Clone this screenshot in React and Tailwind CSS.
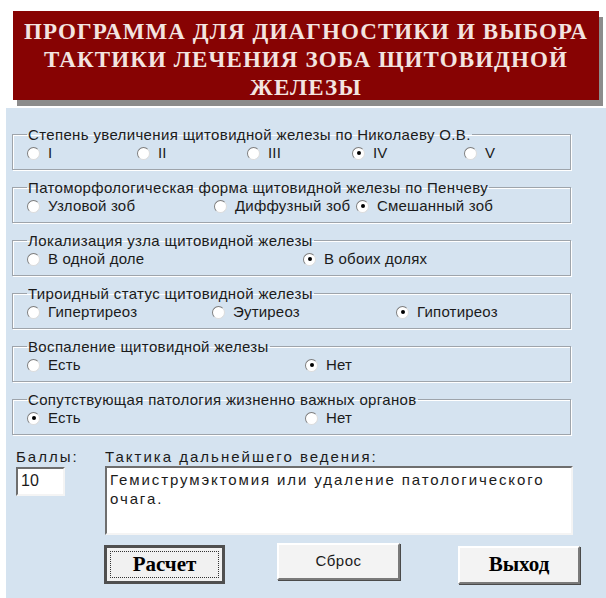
import React from 'react'

// Группы переключателей: подпись рамки, колонки и выбранный пункт
const groups = [
    {
        title: 'Степень увеличения щитовидной железы по Николаеву О.В.',
        cols: 'grid-cols-[110px_110px_105px_112px_1fr]',
        options: ['I', 'II', 'III', 'IV', 'V'],
        checked: 3,
    },
    {
        title: 'Патоморфологическая форма щитовидной железы по Пенчеву',
        cols: 'grid-cols-[187px_142px_1fr]',
        options: ['Узловой зоб', 'Диффузный зоб', 'Смешанный зоб'],
        checked: 2,
    },
    {
        title: 'Локализация узла щитовидной железы',
        cols: 'grid-cols-[276px_1fr]',
        options: ['В одной доле', 'В обоих долях'],
        checked: 1,
    },
    {
        title: 'Тироидный статус щитовидной железы',
        cols: 'grid-cols-[185px_184px_1fr]',
        options: ['Гипертиреоз', 'Эутиреоз', 'Гипотиреоз'],
        checked: 2,
    },
    {
        title: 'Воспаление щитовидной железы',
        cols: 'grid-cols-[278px_1fr]',
        options: ['Есть', 'Нет'],
        checked: 1,
    },
    {
        title: 'Сопутствующая патология жизненно важных органов',
        cols: 'grid-cols-[278px_1fr]',
        options: ['Есть', 'Нет'],
        checked: 0,
    },
]

function Radio({ label, checked }) {
    return (
        <span className="flex items-center gap-[8px] h-[16px] whitespace-nowrap">
            <span className="flex items-center justify-center w-[13px] h-[13px] shrink-0 rounded-full bg-white border border-[#7d7d7d] border-r-[#dcdcdc] border-b-[#dcdcdc]">
                {checked && <span className="w-[4px] h-[4px] rounded-full bg-black" />}
            </span>
            <span className="tracking-[0.2px]">{label}</span>
        </span>
    )
}

function GroupBox({ title, cols, options, checked }) {
    return (
        <fieldset className="w-[559px] ml-[6px] pl-[14px] pt-[2px] pb-[8px] border border-[#9ea4ab] shadow-[1px_1px_0_#ffffff,inset_1px_1px_0_#ffffff]">
            <legend className="px-[1px] leading-[17px] tracking-[0.35px]">{title}</legend>
            <div className={`grid ${cols}`}>
                {options.map((o, i) => (
                    <Radio key={o} label={o} checked={i === checked} />
                ))}
            </div>
        </fieldset>
    )
}

export default function App() {
    return (
        <div className="w-[606px] h-[598px] bg-white font-['Liberation_Sans',Arial,sans-serif] text-[15px] text-[#1b1b1b] overflow-hidden">
            <div className="pt-[11px] pl-[13px]">
                <div className="w-[586px] h-[89px] bg-[#870303] shadow-[4px_6px_0_#8c8c8c] pt-[7px] text-center font-['Liberation_Serif'] font-bold text-[23px] tracking-[1.1px] leading-[28px] text-[#f3e4e0]">
                    <div>ПРОГРАММА ДЛЯ ДИАГНОСТИКИ И ВЫБОРА</div>
                    <div>ТАКТИКИ ЛЕЧЕНИЯ ЗОБА ЩИТОВИДНОЙ</div>
                    <div>ЖЕЛЕЗЫ</div>
                </div>
            </div>

            <div className="mt-[8px] ml-[6px] h-[490px] bg-[#d5e3f0] pt-[18px]">
                <div className="flex flex-col gap-[9px]">
                    {groups.map(g => (
                        <GroupBox key={g.title} {...g} />
                    ))}
                </div>

                <div className="flex mt-[13px] pl-[10px] tracking-[2px]">
                    <div className="w-[89px] flex flex-col">
                        <span className="leading-[17px]">Баллы:</span>
                        <div className="mt-[2px] w-[49px] h-[29px] bg-white border-2 border-[#6e6e6e] border-r-[#f4f4f4] border-b-[#f4f4f4] pl-[3px] leading-[24px] text-[16px] tracking-normal">
                            10
                        </div>
                    </div>
                    <div className="flex flex-col">
                        <span className="leading-[17px]">Тактика дальнейшего ведения:</span>
                        <div className="mt-[1px] w-[468px] h-[69px] bg-white border-2 border-[#6e6e6e] border-r-[#f4f4f4] border-b-[#f4f4f4] px-[3px] pt-[2px] leading-[19px] tracking-[1.9px]">
                            Гемиструмэктомия или удаление патологического очага.
                        </div>
                    </div>
                </div>

                <div className="flex items-start mt-[8px] pl-[98px]">
                    <button className="mt-[2px] w-[121px] h-[39px] bg-[#f1f1f1] border-[3px] border-[#4f4f4f] p-[3px]">
                        <span className="flex items-center justify-center h-full border border-dotted border-[#333] font-['Liberation_Serif'] font-bold text-[21px] text-black">
                            Расчет
                        </span>
                    </button>
                    <button className="ml-[52px] w-[123px] h-[37px] bg-[#f3f3f3] border-2 border-white border-r-[#7a7a7a] border-b-[#7a7a7a] shadow-[1px_1px_0_#4a4a4a] text-[15px] tracking-[0.5px]">
                        Сброс
                    </button>
                    <button className="ml-[58px] mt-[3px] w-[122px] h-[38px] bg-[#f3f3f3] border-2 border-white border-r-[#7a7a7a] border-b-[#7a7a7a] shadow-[1px_1px_0_#4a4a4a] font-['Liberation_Serif'] font-bold text-[21px] text-black">
                        Выход
                    </button>
                </div>
            </div>
        </div>
    )
}
